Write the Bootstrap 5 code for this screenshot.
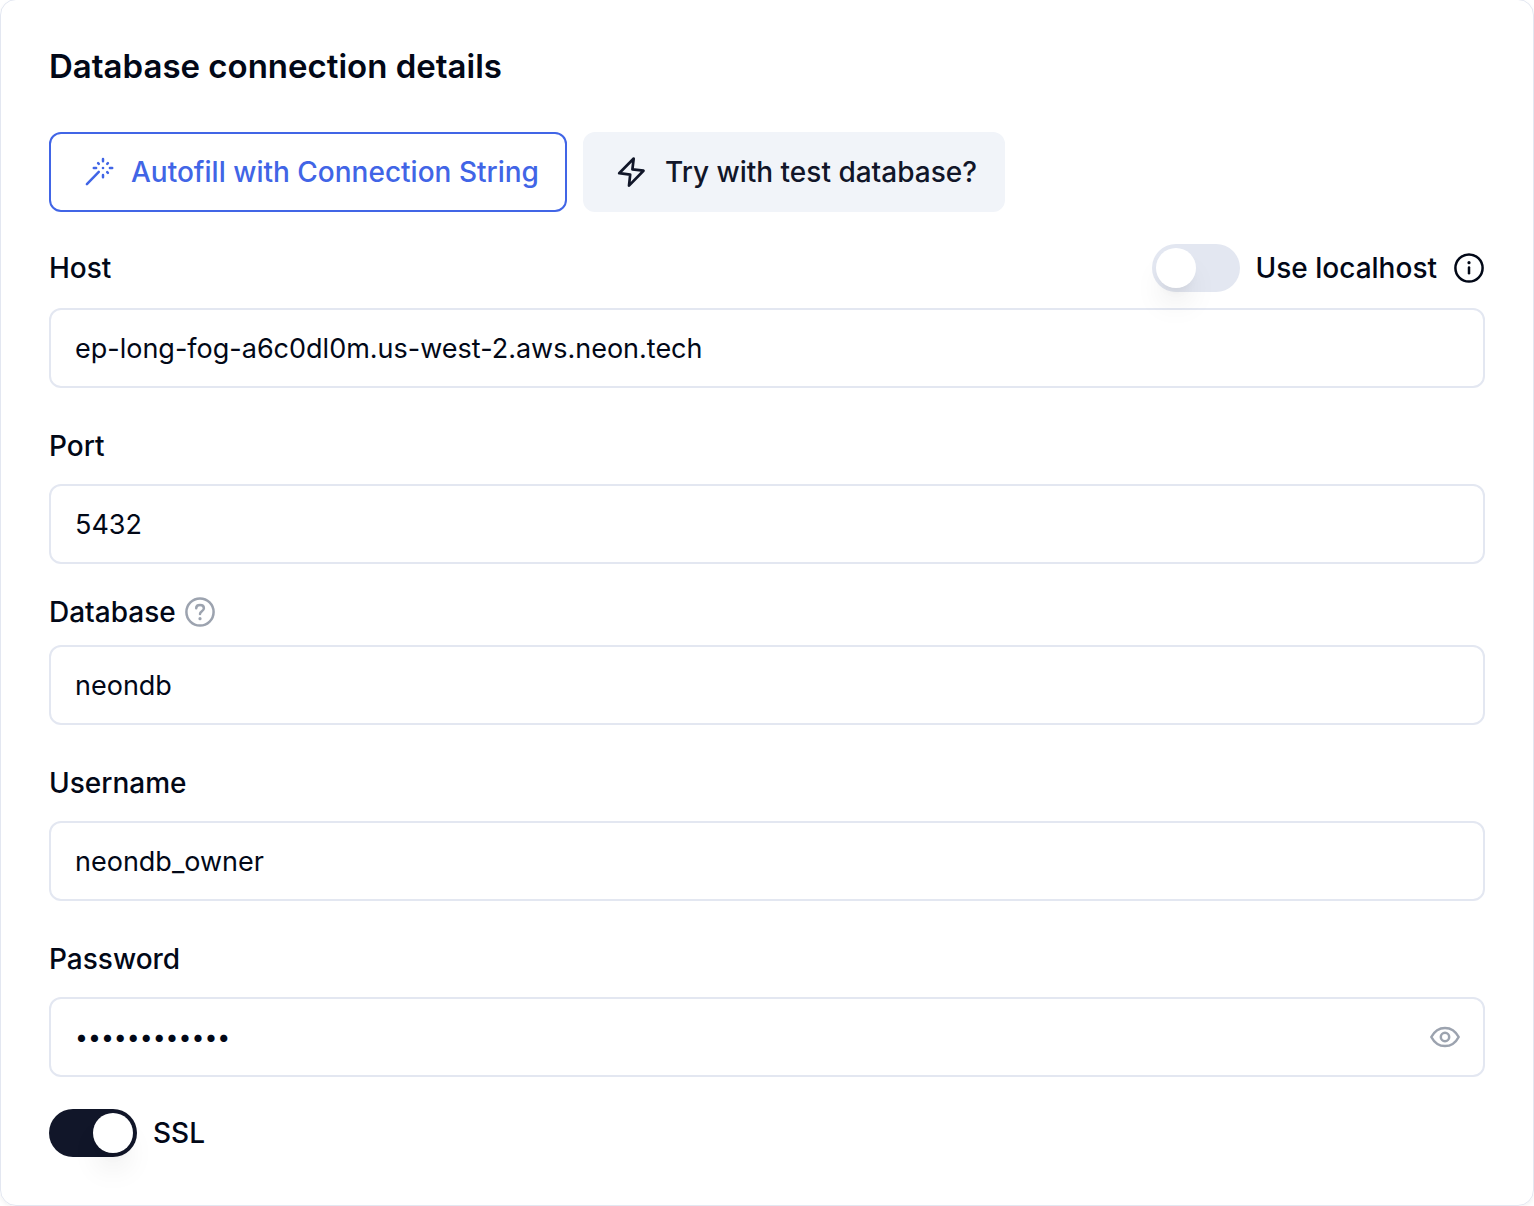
<!DOCTYPE html>
<html lang="en">
<head>
<meta charset="utf-8">
<meta name="viewport" content="width=device-width, initial-scale=1">
<title>Database connection details</title>
<link href="https://cdn.jsdelivr.net/npm/bootstrap@5.3.0/dist/css/bootstrap.min.css" rel="stylesheet">
<style>
:root { --ink: #020817; --line: #e3e7f1; --navy: #111629; --accent: #4165e6; }
body { font-family: Inter, "Liberation Sans", sans-serif; font-size: 28px; line-height: 32px; color: var(--ink); background: #fff; }
.panel { margin-top: -1px; border: 1px solid var(--line); border-radius: 16px; padding: 46px 48px 48px; box-shadow: 0 2px 4px rgba(0,0,0,.05); }
.panel-title { font-size: 33px; line-height: 40px; font-weight: 600; margin-bottom: 46px; }
.field-label { font-weight: 500; line-height: 32px; }
.action { --bs-btn-font-size: 28px; --bs-btn-font-weight: 500; --bs-btn-line-height: 32px; --bs-btn-border-width: 2px; --bs-btn-border-radius: 12px; height: 80px; padding: 0 26px 0 32px; }
.action-outline { --bs-btn-color: var(--accent); --bs-btn-border-color: var(--accent); --bs-btn-hover-color: var(--accent); --bs-btn-hover-border-color: var(--accent); --bs-btn-bg: #fff; }
.action-soft { --bs-btn-color: var(--navy); --bs-btn-bg: #f1f4f9; --bs-btn-border-color: #f1f4f9; --bs-btn-hover-bg: #e3e7f1; }
.glyph { width: 32px; height: 32px; flex: none; display: block; fill: none; stroke: currentColor; stroke-width: 2.5; stroke-linecap: round; stroke-linejoin: round; }
.glyph .dot { fill: currentColor; stroke: none; }
.muted-ink { color: #9ca3af; }
.host-row { margin: 32px 0 16px; }
.ssl-row { margin-top: 32px; }
.field-box.form-control { height: 80px; border: 2px solid var(--line); border-radius: 12px; padding: 0 24px; font-size: 27px; line-height: 32px; color: var(--ink); background: transparent; }
.field-box.form-control[type="password"] { font-size: 23px; padding-right: 72px; }
.field-stack { margin-top: 42px; display: flex; flex-direction: column; gap: 22px; }
.field-stack.compact { margin-top: 32px; gap: 17px; }
.toggle.form-check-input { appearance: none; width: 88px; height: 48px; margin: 0; border: 0; border-radius: 24px; padding: 4px; display: flex; flex: none; background: var(--line); }
.toggle.form-check-input::before { content: ""; width: 40px; height: 40px; border-radius: 50%; background: #fff; box-shadow: 0 20px 30px -6px rgba(0,0,0,.1), 0 8px 12px -8px rgba(0,0,0,.1); }
.toggle.form-check-input:checked { background: var(--navy); justify-content: flex-end; }
.reveal { position: absolute; top: 0; bottom: 0; right: 24px; }
</style>
<script src="https://cdn.jsdelivr.net/npm/bootstrap@5.3.0/dist/js/bootstrap.bundle.min.js" defer></script>
</head>
<body>
<main class="panel">
  <h1 class="panel-title">Database connection details</h1>
  <form>
    <div class="d-flex flex-wrap gap-3">
      <button type="button" class="btn action action-outline d-flex align-items-center gap-3">
        <svg class="glyph" viewBox="0 0 32 32" aria-hidden="true"><path d="M3.900 28.100 15.800 15.900M20 3v2.200M20 18.900v2.300M10.800 12h2.300M26.900 12h2.300M15.100 7.200l.7.7M24.900 7.200l-.7.7M24.900 16.800l-.7-.7"/><circle class="dot" cx="20" cy="12" r="1.300"/></svg>
        <span>Autofill with Connection String</span>
      </button>
      <button type="button" class="btn action action-soft d-flex align-items-center gap-3">
        <svg class="glyph" viewBox="0 0 32 32" aria-hidden="true"><path stroke-width="2.700" d="M16.700 2.500 2.200 17.200 13.200 18.700 12 29.600 26.500 14.700 15.400 13.300Z"/></svg>
        <span>Try with test database?</span>
      </button>
    </div>

    <div class="host-row d-flex flex-wrap align-items-center justify-content-between">
      <label class="field-label" for="host">Host</label>
      <div class="d-flex align-items-center gap-3">
        <input class="form-check-input toggle" type="checkbox" role="switch" id="localhost">
        <label class="field-label" for="localhost">Use localhost</label>
        <svg class="glyph" viewBox="0 0 32 32" role="img" aria-label="Info"><circle cx="16" cy="16" r="13.600"/><path d="M16 15.400v5.800"/><circle class="dot" cx="16" cy="10.700" r="1.600"/></svg>
      </div>
    </div>
    <input class="form-control field-box" id="host" type="text" value="ep-long-fog-a6c0dl0m.us-west-2.aws.neon.tech">

    <div class="field-stack">
      <label class="field-label" for="port">Port</label>
      <input class="form-control field-box" id="port" type="text" inputmode="numeric" value="5432">
    </div>
    <div class="field-stack compact">
      <div class="d-flex align-items-center gap-2">
        <label class="field-label" for="database">Database</label>
        <svg class="glyph muted-ink" viewBox="0 0 32 32" role="img" aria-label="Help"><circle cx="16" cy="16" r="13.600"/><path d="M12.200 12.300c0-2 1.600-3.200 3.800-3.200s3.900 1.200 3.900 3.200c0 3-3.900 2.900-3.900 5.700"/><circle class="dot" cx="16" cy="22.700" r="1.600"/></svg>
      </div>
      <input class="form-control field-box" id="database" type="text" value="neondb">
    </div>
    <div class="field-stack">
      <label class="field-label" for="username">Username</label>
      <input class="form-control field-box" id="username" type="text" value="neondb_owner">
    </div>
    <div class="field-stack">
      <label class="field-label" for="password">Password</label>
      <div class="position-relative">
        <input class="form-control field-box" id="password" type="password" value="abcdefghijkl">
        <button type="button" class="reveal btn border-0 p-0 muted-ink d-flex align-items-center" aria-label="Show password">
          <svg class="glyph" viewBox="0 0 32 32" aria-hidden="true"><path d="M2.300 16C5.600 9.800 10.400 6.900 16 6.900S26.400 9.800 29.700 16C26.400 22.200 21.600 25.100 16 25.100S5.600 22.200 2.300 16Z"/><circle cx="16" cy="16" r="4.200"/></svg>
        </button>
      </div>
    </div>
    <div class="ssl-row d-flex align-items-center gap-3">
      <input class="form-check-input toggle" type="checkbox" role="switch" id="ssl" checked>
      <label class="field-label" for="ssl">SSL</label>
    </div>
  </form>
</main>
</body>
</html>
